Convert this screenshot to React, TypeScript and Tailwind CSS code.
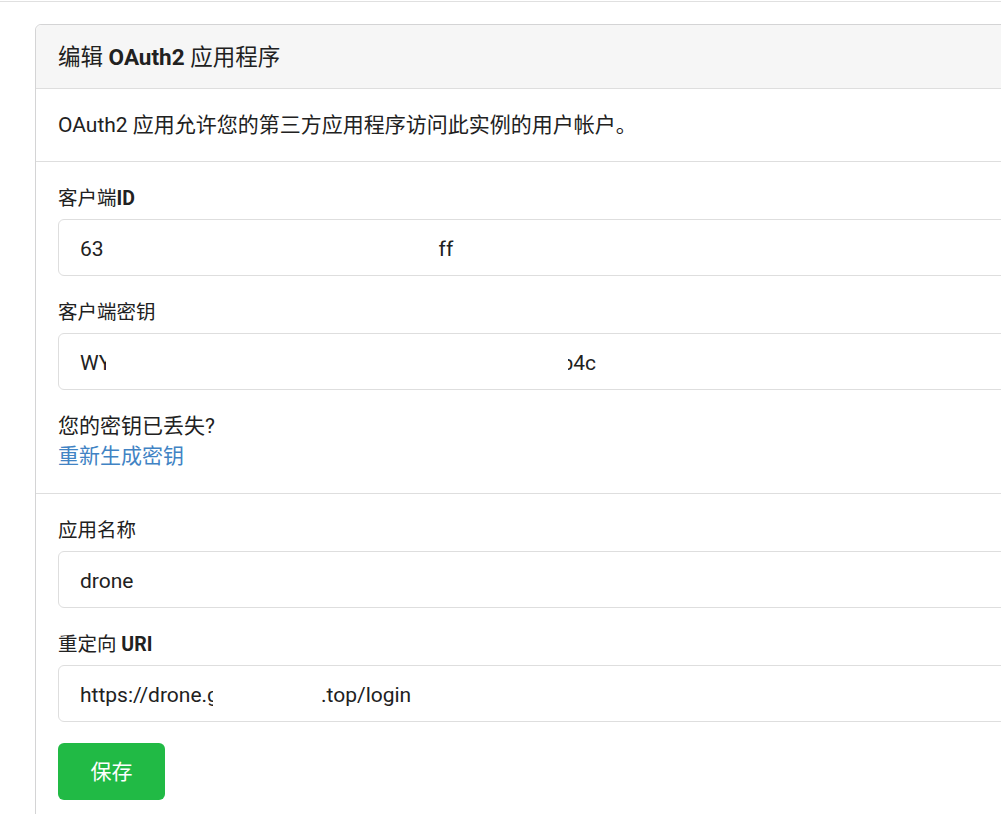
import React from "react";

const font =
	"font-['Roboto','Noto_Sans_CJK_SC',sans-serif]";

function Field({
	label,
	children,
}: {
	label: React.ReactNode;
	children: React.ReactNode;
}) {
	return (
		<div className="mb-[21px]">
			<label className="block text-[19.5px] leading-[32px] mb-[4px] text-[#212121]">
				{label}
			</label>
			<div className="flex items-center h-[57px] rounded-[6px] border border-[#dedede] bg-white px-[21px] pt-[4px] text-[21px] text-[#212121] overflow-hidden whitespace-nowrap">
				{children}
			</div>
		</div>
	);
}

export default function App() {
	return (
		<div
			className={`${font} min-h-[814px] w-full overflow-hidden bg-white text-[#212121]`}
		>
			<div className="h-[2px] border-b border-[#e0e0e0]" />
			<div className="ml-[35px] mt-[22px] w-[1100px] rounded-t-[6px] border border-[#d4d4d5]">
				<div className="rounded-t-[6px] border-b border-[#dedede] bg-[#f6f6f6] px-[22px] pt-[18px] pb-[16px] text-[22.5px] leading-[29px]">
					编辑 <span className="font-bold">OAuth2</span> 应用程序
				</div>
				<div className="border-b border-[#dedede] px-[22px] py-[21px] text-[21px] leading-[30px]">
					OAuth2 应用允许您的第三方应用程序访问此实例的用户帐户。
				</div>
				<div className="border-b border-[#dedede] px-[22px] pt-[21px] pb-[22px]">
					<Field
						label={
							<>
								客户端<span className="font-bold">ID</span>
							</>
						}
					>
						<span>63</span>
						<span className="ml-[335px]">ff</span>
					</Field>
					<Field label="客户端密钥">
						<span className="inline-block w-[26px] overflow-hidden">WY</span>
						<span className="ml-[462px] inline-flex w-[28px] justify-end overflow-hidden">
							b4c
						</span>
					</Field>
					<div className="text-[21px] leading-[30px]">
						<p>您的密钥已丢失?</p>
						<a className="text-[#4183c4]" href="#">
							重新生成密钥
						</a>
					</div>
				</div>
				<div className="px-[22px] py-[21px]">
					<Field label="应用名称">
						<span>drone</span>
					</Field>
					<Field
						label={
							<>
								重定向 <span className="font-bold">URI</span>
							</>
						}
					>
						<span className="inline-block w-[133px] overflow-hidden">
							https://drone.g
						</span>
						<span className="ml-[108px]">.top/login</span>
					</Field>
					<button
						type="button"
						className="h-[57px] w-[107px] rounded-[6px] bg-[#21ba45] pt-[2px] text-[21px] text-white"
					>
						保存
					</button>
				</div>
			</div>
		</div>
	);
}
